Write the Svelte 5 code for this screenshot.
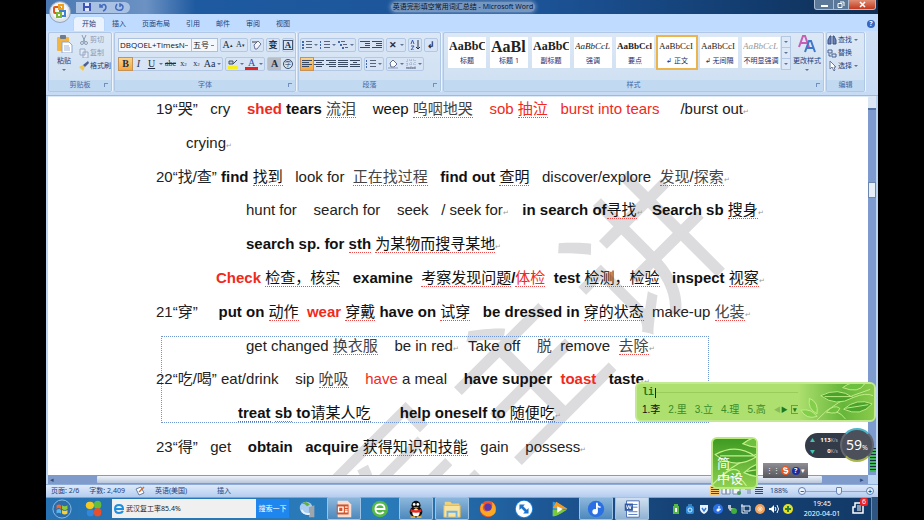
<script>
  const tabs = ['开始', '插入', '页面布局', '引用', '邮件', '审阅', '视图'];

  const styleCards = [
    { look: 'head', sample: 'AaBbC', name: '标题' },
    { look: 'head big', sample: 'AaBl', name: '标题 1' },
    { look: 'head', sample: 'AaBbC', name: '副标题' },
    { look: 'italic', sample: 'AaBbCcL', name: '强调' },
    { look: 'bold', sample: 'AaBbCcl', name: '要点' },
    { look: '', sample: 'AaBbCcI', name: '↲ 正文', on: true },
    { look: '', sample: 'AaBbCcI', name: '↲ 无间隔' },
    { look: 'italic pale', sample: 'AaBbCcL', name: '不明显强调' }
  ];

  // A number is a run of spaces, a string is plain text, a pair is [class, text].
  const end = ['mark', '↵'];
  const lines = [
    { indent: 0, runs: ['19“哭”', 3, 'cry', 4, ['b red', 'shed'], 1, ['b', 'tears'], 1, ['c u', '流泪'], 4, ['k', 'weep'], 1, ['c u', '呜咽地哭'], 4, ['red', 'sob'], 1, ['red u', '抽泣'], 3, ['red', 'burst into tears'], 5, '/burst out', end] },
    { indent: 30, runs: ['crying', end] },
    { indent: 0, runs: ['20“找/查”', 1, ['b', 'find'], 1, ['k u', '找到'], 3, 'look for', 2, ['c u', '正在找过程'], 3, ['b', 'find out'], 1, ['k u', '查明'], 3, 'discover/explore', 2, ['c u', '发现'], '/', ['c u', '探索'], end] },
    { indent: 90, runs: ['hunt for', 4, 'search for', 4, 'seek', 3, '/ seek for', end, 3, ['b', 'in search of'], ['k u', '寻找'], end, 2, ['b', 'Search sb'], 1, ['k u', '搜身'], end] },
    { indent: 90, runs: [['b', 'search sp. for '], ['b u', 'sth'], 1, ['k u', '为某物而搜寻某地'], end] },
    { indent: 60, runs: [['b red', 'Check'], 1, ['k u', '检查，核实'], 3, ['b', 'examine'], 2, ['k u', '考察发现问题'], ['b', '/'], ['red u', '体检'], 2, ['b', 'test'], 1, ['k u', '检测，检验'], 3, ['b', 'inspect'], 1, ['k u', '视察'], end] },
    { indent: 0, runs: ['21“穿”', 5, ['b', 'put on'], 1, ['k u', '动作'], 2, ['b red', 'wear'], 1, ['k u', '穿戴'], 1, ['b', 'have on'], 1, ['k u', '试穿'], 3, ['b', 'be dressed in'], 1, ['k u', '穿的状态'], 2, 'make-up', 1, ['c u', '化装'], end] },
    { indent: 90, runs: ['get changed', 1, ['c u', '换衣服'], 4, 'be in red', end, 2, 'Take off', 4, ['c', '脱'], 2, 'remove', 2, ['c u', '去除'], end] },
    { indent: 0, runs: ['22“吃/喝”', 1, 'eat/drink', 4, 'sip', 1, ['c u', '吮吸'], 4, ['red', 'have'], 1, 'a meal', 4, ['b', 'have supper'], 2, ['b red', 'toast'], 3, ['b', 'taste'], end] },
    { indent: 82, runs: [['b ug', 'treat'], 1, ['b u', 'sb'], ['b', ' to'], ['k u', '请某人吃'], 7, ['b', 'help oneself to'], 1, ['k u', '随便吃'], end] },
    { indent: 0, runs: ['23“得”', 3, 'get', 4, ['b', 'obtain'], 3, ['b', 'acquire'], 1, ['k u', '获得知识和技能'], 3, 'gain', 4, 'possess', end] }
  ];

  const candidates = ['李', '里', '立', '理', '高'];

  let zoom = $state(56);
  let search = $state('武汉复工率85.4%');
  let typed = $state('li');
</script>

{#snippet arrow()}<i class="arrow"></i>{/snippet}

{#snippet bars(widths, x)}
  <svg class="ic" viewBox="0 0 10 10">
    {#each widths as w, i}
      <rect x={x === 'r' ? 10 - w : x === 'c' ? (10 - w) / 2 : 0} y={1 + i * 2} width={w} height="1" fill="#3b4a63" />
    {/each}
  </svg>
{/snippet}

{#snippet listIcon(kind)}
  <svg class="ic" viewBox="0 0 10 10">
    {#each [1, 4, 7] as y, i}
      <rect x={kind === 2 ? i * 2 : 0} {y} width={kind === 1 ? 1 : 2} height="2" fill="#3f68ad" />
      <rect x={kind === 2 ? i * 2 + 3 : 4} {y} width={kind === 2 ? 4 : 6} height="1" fill="#58657c" />
    {/each}
  </svg>
{/snippet}

{#snippet leaves()}
  <g fill="#4aa32a" stroke="#c4f08c" stroke-width="1">
    <path d="M20 40Q38 18 76 6" fill="none" />
    <path d="M24 13Q42 3 58 15Q40 26 24 13Z" />
    <path d="M47 4Q58-5 70 0Q64 11 47 4Z" fill="#6cc03e" />
    <path d="M48 28Q62 15 78 22Q66 37 48 28Z" />
    <path d="M12 16Q22 20 20 33Q10 28 12 16Z" fill="#83cf4b" />
    <path d="M3 29Q14 27 20 36Q9 40 3 29Z" fill="#83cf4b" />
    <path d="M58 15Q72 9 79 13M28 14L56 14M50 27L74 23M30 32Q42 27 50 39" fill="none" />
    <path d="M30 31Q38 22 44 27Q42 35 30 31Z" fill="#6cc03e" />
  </g>
{/snippet}

<main>
  <header class="title">
    <div class="quick">
      <button aria-label="保存"><svg class="ic" viewBox="0 0 10 10"><path d="M1 1h8v8H1z" fill="#3e54b8" /><path d="M3 1h4v3H3zM3 6h4v3H3z" fill="#dfe8fa" /></svg></button>
      <button aria-label="撤消"><svg class="ic" viewBox="0 0 10 10"><path d="M2 2v3h3M2 5q5-5 6 0q0 3-3 4" fill="none" stroke="#4169bd" stroke-width="1.5" /></svg></button>
      <button aria-label="重复"><svg class="ic" viewBox="0 0 10 10"><path d="M3 2q-3 5 1 6q5 1 5-3q0-2-3-3v3" fill="none" stroke="#4169bd" stroke-width="1.5" /></svg></button>
    </div>
    <h1>英语完形填空常用词汇总结 - Microsoft Word</h1>
    <div class="winbtns">
      <button aria-label="最小化"><svg viewBox="0 0 18 9"><path d="M6 5h7v2H6z" fill="#fff" /></svg></button>
      <button aria-label="还原"><svg viewBox="0 0 14 9"><path d="M6 2h4v4M4 3.500h4v4H4z" fill="none" stroke="#fff" /></svg></button>
      <button class="close" aria-label="关闭"><svg viewBox="0 0 26 9"><path d="M11 2l5 5M16 2l-5 5" stroke="#fff" stroke-width="1.600" /></svg></button>
    </div>
  </header>
  <button class="orb" aria-label="Office 按钮">
    <svg viewBox="0 0 22 22">
      <circle cx="11" cy="11" r="10.500" fill="#dfe3ea" stroke="#8ea2bd" />
      <circle cx="11" cy="10" r="8" fill="#f6f7fa" />
      <g fill="none" stroke-width="2"><rect x="5" y="6" width="6" height="6" rx="1" stroke="#e0561c" /><rect x="10" y="4" width="4" height="4" stroke="#f0a11c" /><rect x="12" y="10" width="4" height="5" stroke="#3f83d0" /><rect x="8" y="12" width="4" height="4" stroke="#7db634" /></g>
    </svg>
  </button>

  <nav class="tabs">
    {#each tabs as t, i}<button class:active={i === 0}>{t}</button>{/each}
    <button class="help" aria-label="帮助">?</button>
  </nav>

  <section class="ribbon">
    <div class="group clip">
      <div class="body">
        <button class="tall">
          <svg width="18" height="18" viewBox="0 0 18 18"><rect x="2" y="2" width="12" height="14" rx="1" fill="#f0b545" /><rect x="5" y="0" width="6" height="4" rx="1" fill="#6f7a8c" /><path d="M7 7h7l3 3v8H7z" fill="#fff" stroke="#8ea7cf" /><path d="M9 11h5M9 13h6M9 15h6" stroke="#9db3d8" /></svg>
          <span>粘贴</span>{@render arrow()}
        </button>
        <div class="stack">
          <button class="dim"><svg class="ic" viewBox="0 0 10 10"><path d="M3 0l3 7M7 0L4 7" stroke="#8d9bb0" /><circle cx="3" cy="8" r="1.500" fill="none" stroke="#8d9bb0" /><circle cx="7" cy="8" r="1.500" fill="none" stroke="#8d9bb0" /></svg>剪切</button>
          <button class="dim"><svg class="ic" viewBox="0 0 10 10"><path d="M1 1h5v6H1zM4 4h5v6H4z" fill="#e3ebf6" stroke="#98a9c4" /></svg>复制</button>
          <button><svg class="ic" viewBox="0 0 10 10"><path d="M0 6l4-2 2 2-2 4z" fill="#f1c84c" /><path d="M4 4l5-4 1 2-4 4z" fill="#4c5f92" /></svg>格式刷</button>
        </div>
      </div>
      <footer>剪贴板<i class="launch"></i></footer>
    </div>

    <div class="group font">
      <div class="body rows">
        <div class="row">
          <select class="face" aria-label="字体"><option>DBQOEL+TimesNe</option></select>
          <select class="size" aria-label="字号"><option>五号</option></select>
          <div class="set serif"><button>A<sup>▴</sup></button><button class="sm">A<sup>▾</sup></button></div>
          <div class="set"><button aria-label="清除格式"><svg class="ic" viewBox="0 0 10 10"><path d="M2 5l4-4 3 3-4 5H3z" fill="#f4f4fa" stroke="#65749a" /><path d="M0 2h5" stroke="#444" /></svg></button></div>
          <div class="set"><button class="wen">变</button></div>
          <div class="set"><button class="boxed">A</button></div>
        </div>
        <div class="row">
          <div class="set serif"><button class="on"><b>B</b></button><button><em>I</em></button><button><u>U</u></button>{@render arrow()}<button class="sm"><s>abc</s></button><button class="sm">x<sub>2</sub></button><button class="sm">x<sup>2</sup></button><button>Aa</button>{@render arrow()}</div>
          <div class="set serif"><button class="hl" aria-label="突出显示"><svg class="ic" viewBox="0 0 10 10"><path d="M1 2h4v3H1zM5 5l4-4" stroke="#444f63" fill="#b8c5d6" /><path d="M0 7h10v3H0z" fill="#f7ef1d" /></svg></button>{@render arrow()}<button class="fc">A</button>{@render arrow()}</div>
          <div class="set serif"><button class="shade">A</button><button class="ring">字</button></div>
        </div>
      </div>
      <footer>字体<i class="launch"></i></footer>
    </div>

    <div class="group para">
      <div class="body rows">
        <div class="row">
          <div class="set">{#each [0, 1, 2] as k}<button aria-label="列表">{@render listIcon(k)}</button>{@render arrow()}{/each}</div>
          <div class="set"><button aria-label="减少缩进">{@render bars([10, 5, 5, 10], 'r')}</button><button aria-label="增加缩进">{@render bars([10, 6, 6, 10], 'r')}</button></div>
          <div class="set"><button class="glyph">✕</button>{@render arrow()}</div>
          <div class="set"><button aria-label="排序"><svg class="ic" viewBox="0 0 10 10"><path d="M1 4l1.500-4 1.500 4M1 6h3l-3 4h3" fill="none" stroke="#3c55b0" /><path d="M8 0v9M6 7l2 2 2-2" fill="none" stroke="#26324a" /></svg></button></div>
          <div class="set"><button class="glyph">↲</button></div>
        </div>
        <div class="row">
          <div class="set"><button class="on" aria-label="左对齐">{@render bars([10, 7, 10, 7], 'l')}</button><button aria-label="居中">{@render bars([10, 6, 10, 6], 'c')}</button><button aria-label="右对齐">{@render bars([10, 7, 10, 7], 'r')}</button><button aria-label="两端对齐">{@render bars([10, 10, 10, 10], 'l')}</button><button aria-label="分散对齐">{@render bars([10, 4, 10, 10], 'c')}</button></div>
          <div class="set"><button aria-label="行距">{@render listIcon(1)}</button>{@render arrow()}</div>
          <div class="set"><button aria-label="底纹"><svg class="ic" viewBox="0 0 10 10"><path d="M2 4l3-3 4 4-3 3H3z" fill="#fff" stroke="#5a6c8f" /><path d="M0 9h10" stroke="#8c9bb4" /></svg></button>{@render arrow()}<button aria-label="边框"><svg class="ic" viewBox="0 0 10 10"><path d="M1 1h8v8H1zM5 1v8M1 5h8" fill="none" stroke="#97a6bf" stroke-dasharray="1 1" /><path d="M0 9h10" stroke="#55637c" /></svg></button>{@render arrow()}</div>
        </div>
      </div>
      <footer>段落<i class="launch"></i></footer>
    </div>

    <div class="group styles">
      <div class="body">
        <div class="cards">
          {#each styleCards as s}
            <button class="card" class:chosen={s.on}><span class="sample {s.look}">{s.sample}</span><span>{s.name}</span></button>
          {/each}
        </div>
        <div class="more"><button aria-label="上">{@render arrow()}</button><button aria-label="下">{@render arrow()}</button><button aria-label="更多">{@render arrow()}</button></div>
        <button class="tall">
          <svg width="18" height="18" viewBox="0 0 18 18"><path d="M1 12L5 1h2l4 11M3 8h6" fill="none" stroke="#c45fb4" stroke-width="2" /><path d="M7 17l4-11h2l4 11M9 13h6" fill="none" stroke="#3f78c8" stroke-width="2" /></svg>
          <span>更改样式</span>{@render arrow()}
        </button>
      </div>
      <footer>样式<i class="launch"></i></footer>
    </div>

    <div class="group edit">
      <div class="body">
        <div class="stack">
          <button><svg class="ic" viewBox="0 0 10 10"><path d="M1 9V5l2-4h1v8zM6 9V1h1l2 4v4z" fill="#6b83b5" stroke="#3b5080" /></svg>查找{@render arrow()}</button>
          <button><svg class="ic" viewBox="0 0 10 10"><path d="M1 2h4v3H1zM5 6h4v3H5zM2 6v2h2" fill="none" stroke="#49618f" /></svg>替换</button>
          <button><svg class="ic" viewBox="0 0 10 10"><path d="M3 0v8l2-2 2 4 1-1-1-3h2z" fill="#fff" stroke="#68799c" /></svg>选择{@render arrow()}</button>
        </div>
      </div>
      <footer>编辑</footer>
    </div>
  </section>

  <section class="doc">
    <div class="paper">
      <div class="watermark" aria-hidden="true"><span>军</span><span>主</span><span>讲</span></div>
      <div class="frame"></div>
      {#each lines as l}
        <p style:padding-left="{l.indent}px">{#each l.runs as r}{#if typeof r === 'number'}{' '.repeat(r)}{:else if typeof r === 'string'}{r}{:else}<span class={r[0]}>{r[1]}</span>{/if}{/each}</p>
      {/each}
    </div>
    <div class="vscroll"><span class="ruler"></span><span class="thumb"></span></div>
  </section>

  <div class="hscroll"><i>◂</i><span></span><i class="right">▸</i></div>

  <div class="status">
    <span>页面: 2/6</span><span>字数: 2,409</span>
    <svg class="ic" viewBox="0 0 10 10"><path d="M1 3l5-2 3 6-5 2z" fill="#fff" stroke="#6a7da2" /><path d="M4 6l5-5" stroke="#d0702c" stroke-width="1.500" /></svg>
    <span>英语(美国)</span><span class="ins">插入</span>
    <div class="views">
      <button class="on" aria-label="页面视图">{@render bars([8, 8, 8, 8], 'c')}</button>
      <button aria-label="阅读版式"><svg class="ic" viewBox="0 0 10 10"><path d="M1 2h4v6H1zM5 2h4v6H5z" fill="#f0f4fa" stroke="#7b8ba6" /></svg></button>
      <button aria-label="Web 版式"><svg class="ic" viewBox="0 0 10 10"><path d="M1 2h7v6H1z" fill="#f0f4fa" stroke="#7b8ba6" /><circle cx="7" cy="7" r="2" fill="#4d9a5a" /></svg></button>
      <button aria-label="大纲"><svg class="ic" viewBox="0 0 10 10"><path d="M2 3h6M4 5h4M4 7h4" stroke="#7b8ba6" /></svg></button>
      <button aria-label="普通">{@render bars([8, 8, 8, 8], 'c')}</button>
    </div>
    <span class="pct">188%</span>
    <button class="round" aria-label="缩小">−</button>
    <input type="range" aria-label="缩放" min="0" max="100" bind:value={zoom} />
    <button class="round" aria-label="放大">+</button>
  </div>

  <footer class="taskbar">
    <button class="app" aria-label="开始菜单"><svg viewBox="0 0 22 22"><circle cx="11" cy="11" r="10" fill="#2c6aa8" stroke="#8ec3ea" /><path d="M5 7q3-2 5 0v4q-3-2-5 0z" fill="#f0662c" /><path d="M11 7q3 2 6 0v4q-3 2-6 0z" fill="#8ccb3a" /><path d="M5 12q3-2 5 0v4q-3-2-5 0z" fill="#55b7f0" /><path d="M11 12q3 2 6 0v4q-3 2-6 0z" fill="#fbd034" /></svg></button>
    <button class="app second" aria-label="工具"><svg viewBox="0 0 22 22"><rect x="2" y="3" width="9" height="8" rx="4" fill="#f4c921" /><rect x="11" y="2" width="8" height="9" rx="4" fill="#62bd3c" /><rect x="3" y="11" width="8" height="8" rx="4" fill="#3287dd" /><rect x="11" y="10" width="8" height="9" rx="4" fill="#ea4f2c" /></svg></button>
    <form class="search" onsubmit={(e) => e.preventDefault()}>
      <svg viewBox="0 0 12 12"><path d="M2 6h8q0-4-4-4T2 6q0 4 4 4 3 0 4-2" fill="none" stroke="#1e8fe0" stroke-width="2" /></svg>
      <input aria-label="搜索" bind:value={search} /><button>搜索一下</button>
    </form>
    <div class="apps">
      <button class="app" aria-label="同步"><svg viewBox="0 0 22 22"><circle cx="9" cy="10" r="7" fill="#a9cdf2" /><path d="M4 5q5-4 9 1l-3 2q-2-3-6-3z" fill="#62b13b" /><path d="M12 9l6-2v13h-6z" fill="#9da5ad" /><path d="M4 12q3 6 9 4" stroke="#e8f1fa" stroke-width="2" fill="none" /></svg></button>
      <button class="app open" aria-label="PowerPoint"><svg viewBox="0 0 22 22"><path d="M4 2h11l4 4v14H4z" fill="#f7ded3" /><path d="M3 6h13v11H3z" fill="#d3532b" /><path d="M5 9h5v5H5zM12 9h3M12 12h3M12 14h3" stroke="#fff" stroke-width="1.500" fill="none" /></svg></button>
      <button class="app" aria-label="浏览器"><svg viewBox="0 0 22 22"><circle cx="11" cy="11" r="9" fill="#55b847" /><path d="M6 11h10q0-5-5-5t-5 5q0 5 5 5 3 0 4-2" fill="none" stroke="#fff" stroke-width="2" /></svg></button>
      <button class="app open" aria-label="QQ"><svg viewBox="0 0 22 22"><ellipse cx="11" cy="14" rx="7" ry="6" fill="#111" /><circle cx="11" cy="7" r="5" fill="#111" /><ellipse cx="11" cy="15" rx="4" ry="4" fill="#fff" /><path d="M5 11q6 3 12 0v3q-6 2-12 0z" fill="#e32a20" /><circle cx="9" cy="6" r="1.500" fill="#fff" /><circle cx="13" cy="6" r="1.500" fill="#fff" /><path d="M8 9h6l-3 2z" fill="#f5a91c" /><path d="M5 19h5v2H5zM12 19h5v2h-5z" fill="#f5a91c" /></svg></button>
      <button class="app open" aria-label="文件夹"><svg viewBox="0 0 22 22"><path d="M3 3h6l2 2h8v5H3z" fill="#f0d27a" /><path d="M2 7h18v13H2z" fill="#f8e3a0" stroke="#d9b455" /><path d="M6 20v-6h10v6" fill="none" stroke="#6cb3e2" stroke-width="2" /></svg></button>
      <button class="app" aria-label="Firefox"><svg viewBox="0 0 22 22"><circle cx="11" cy="11" r="9" fill="#f0532d" /><path d="M4 5q-4 8 2 12 7 5 13-2 2-8-4-12 2 5-1 8-4 5-8 1-2-4 1-6-2 0-3-1z" fill="#fba922" /><circle cx="11" cy="9" r="4" fill="#573ab0" /></svg></button>
      <button class="app" aria-label="TeamViewer"><svg viewBox="0 0 22 22"><circle cx="11" cy="11" r="10" fill="#1d86e0" /><circle cx="11" cy="11" r="9" fill="#fff" /><path d="M8 8l6 6" stroke="#1d74cc" stroke-width="3" /><path d="M6 6h6l-6 6zM16 16h-6l6-6z" fill="#1d74cc" /></svg></button>
      <button class="app" aria-label="播放器"><svg viewBox="0 0 22 22"><path d="M3 3q2-1 15 7 2 1 0 2Q5 20 3 19z" fill="#2d9be6" /><path d="M3 10l4-7q11 7 12 8z" fill="#f79a20" /><path d="M3 12l15 0Q6 20 3 19z" fill="#7bc83a" /><path d="M8 8l6 3-6 4z" fill="#fff" /></svg></button>
      <button class="app open" aria-label="音乐"><svg viewBox="0 0 22 22"><circle cx="11" cy="11" r="9" fill="#2a70e4" /><path d="M12 4v10" stroke="#fff" stroke-width="2" /><path d="M12 4q1 4 4 4v2q-3 0-4-2z" fill="#fff" /><circle cx="10" cy="14" r="3" fill="#fff" /></svg></button>
      <button class="app open lit" aria-label="Word"><svg viewBox="0 0 22 22"><path d="M5 2h14v18H5z" fill="#fff" stroke="#4368ad" /><path d="M11 6h6M11 9h6M7 14h10M7 17h10" stroke="#4a73bb" /><path d="M3 5h9v8H3z" fill="#3159a5" /><path d="M5 7l1 4 1.500-4L9 11l1-4" stroke="#fff" fill="none" /></svg></button>
    </div>
    <div class="tray">
      <svg viewBox="0 0 10 10"><path d="M3 0h4v2h1v8H2V2h1z" fill="#58b749" /><path d="M4 4h2v4H4z" fill="#fff" /></svg>
      <svg viewBox="0 0 10 10"><rect x="1" y="2" width="8" height="8" rx="2" fill="#2f8edb" /><circle cx="5" cy="6" r="2" fill="none" stroke="#cfe6fb" /><path d="M3 1h4" stroke="#69b8f5" /></svg>
      <svg viewBox="0 0 10 10"><path d="M1 1h8v4q0 3-4 5-4-2-4-5z" fill="#e9f3ff" /><path d="M3 4l2 3 2-3" stroke="#2d7bdb" fill="none" stroke-width="1.500" /></svg>
      <svg viewBox="0 0 10 10"><circle cx="5" cy="5" r="5" fill="#2a70e4" /><path d="M6 2v4l2-1" stroke="#fff" fill="none" /><circle cx="5" cy="6" r="1.500" fill="#fff" /></svg>
      <svg viewBox="0 0 10 10"><path d="M1 1h3v3h3v3H3L1 4z" fill="#b9c3cd" /><circle cx="7" cy="7" r="3" fill="#42ae3e" /></svg>
      <svg viewBox="0 0 10 10"><path d="M3 2h6v5H3zM0 2h3M1 0v9h6" fill="none" stroke="#f1f6fb" /></svg>
      <svg viewBox="0 0 10 10"><circle cx="5" cy="5" r="5" fill="#f3a25b" /><path d="M2 5h6M5 2v6M3 3l4 4M7 3L3 7" stroke="#fbe3c8" /></svg>
      <svg viewBox="0 0 10 10"><path d="M0 4h2l3-3v8L2 6H0z" fill="#fff" /><path d="M6 3q2 2 0 4M8 1q3 4 0 8" stroke="#fff" fill="none" /></svg>
      <svg viewBox="0 0 10 10"><circle cx="5" cy="5" r="5" fill="#e4df2b" /><path d="M5 2v6M2 5h6" stroke="#2b7f32" stroke-width="2" /></svg>
    </div>
    <time>19:45<br />2020-04-01</time>
    <button class="note" aria-label="通知"><svg viewBox="0 0 12 12"><path d="M3 1h8v10H1V5h2z" fill="none" stroke="#fff" stroke-width="1.500" /><path d="M5 4h4M5 6h4M5 8h4" stroke="#fff" /></svg><span>6</span></button>
    <div class="peek"></div>
  </footer>

  <aside class="ime">
    <svg class="art" viewBox="0 0 80 40" preserveAspectRatio="none"><rect width="80" height="40" fill="url(#fade)" /><defs><linearGradient id="fade"><stop offset="0" stop-color="#aee06f" /><stop offset="0.600" stop-color="#66b63a" /><stop offset="1" stop-color="#8acb4c" /></linearGradient></defs>{@render leaves()}</svg>
    <input aria-label="拼音" bind:value={typed} />
    <i class="caret"></i>
    <hr />
    <ol>
      {#each candidates as c, i}<li class:first={i === 0}>{i + 1}.{c}</li>{/each}
      <li class="nav"><i>◀</i>▶<b>▾</b></li>
    </ol>
  </aside>

  <aside class="badge">
    <svg viewBox="0 0 80 40" preserveAspectRatio="xMidYMid slice">{@render leaves()}</svg>
    <span>简<br />中设</span>
  </aside>

  <aside class="sogou">
    <i>⋮⋮</i><svg viewBox="0 0 10 10"><circle cx="5" cy="5" r="5" fill="#f2571d" /><path d="M7 3q-4-2-4 0t3 2 0 3q-2 0-3-1" stroke="#fff" fill="none" stroke-width="1.500" /></svg><b>?</b><i>▾</i>
  </aside>

  <div class="level"></div>
  <aside class="speed">
    <div class="rates"><span><i>▲</i>113<small>K/s</small></span><span><i>▼</i>0<small>K/s</small></span></div>
    <div class="dial">59<small>%</small></div>
  </aside>
</main>

<style>
  :global(body) { margin: 0; background: #000; }
  main { position: relative; margin: 0 46px; height: 100vh; display: flex; flex-direction: column; overflow: hidden; font: 7px/10px "Noto Sans", "Noto Sans CJK SC", sans-serif; color: #1f3d78; background: #bcd5f3; }
  button { font: inherit; color: inherit; background: none; border: 0; padding: 0; margin: 0; white-space: nowrap; }
  i { font-style: normal; }
  .ic { width: 10px; height: 10px; flex: none; display: block; }
  .arrow { width: 0; height: 0; border: 2px solid transparent; border-top-color: #5f7596; border-bottom: 0; flex: none; margin: 0 1px; }

  .title { height: 14px; flex: none; display: flex; align-items: center; justify-content: space-between; background: linear-gradient(90deg, #4978b2 0, #6c92c3 12%, #1e5aa0 18%, #1c5396 60%, #123c6e 85%, #0f2d52 100%); }
  .quick { display: flex; gap: 6px; height: 11px; align-items: center; margin-left: 30px; padding: 0 6px; border-radius: 0 6px 6px 0; background: #a9c2e4; }
  h1 { margin: 0 18px 0 0; padding: 0 2px; font: 7px/10px "Open Sans", "Noto Sans CJK SC", sans-serif; color: #06101f; background: #7496c1; box-shadow: 0 0 4px 1px #7496c1; border-radius: 5px; }
  .winbtns { display: flex; align-self: flex-start; margin-right: 2px; border: 1px solid #a9bdd6; border-top: 0; border-radius: 0 0 3px 3px; overflow: hidden; background: #5c7898; }
  .winbtns button { height: 9px; border-right: 1px solid #a9bdd6; }
  .winbtns svg { height: 9px; display: block; }
  .winbtns .close { background: linear-gradient(#e08d74, #c23a1e); border: 0; }
  .orb { position: absolute; left: 3px; top: 1px; width: 22px; height: 22px; z-index: 2; }
  .orb svg { display: block; }

  .tabs { height: 17px; flex: none; display: flex; align-items: flex-end; padding: 0 3px 0 28px; background: #bfdbff; }
  .tabs button { height: 14px; padding: 0 8px; line-height: 12px; }
  .tabs .active { background: #e9f2fd; border-radius: 3px 3px 0 0; box-shadow: 0 0 1px #7f9fcb; }
  .tabs .help { margin: 0 0 3px auto; padding: 0; width: 8px; height: 8px; line-height: 8px; border-radius: 4px; background: #3767c0; color: #fff; font-weight: bold; }

  .ribbon { flex: none; height: 60px; display: flex; gap: 2px; padding: 1px 13px 3px 2px; background: linear-gradient(#cfe0f4, #c7dbf4); border-bottom: 1px solid #9db9dd; box-sizing: content-box; }
  .group { display: flex; flex-direction: column; border: 1px solid #b0c8e6; border-radius: 2px; background: linear-gradient(#dce8f6, #cddff2); box-sizing: border-box; box-shadow: 1px 0 #eef5fd; }
  .group .body { flex: 1; display: flex; }
  .group footer { position: relative; height: 11px; line-height: 10px; text-align: center; background: #c1d9f1; color: #4468a3; }
  .launch { position: absolute; right: 3px; top: 3px; width: 4px; height: 4px; box-sizing: border-box; border: 1px solid #6f8fbd; border-right: 0; border-bottom: 0; }
  .clip { width: 64px; }
  .font { width: 182px; }
  .para { width: 143px; }
  .styles { flex: 1; min-width: 0; }
  .edit { width: 39px; }
  .tall { width: 30px; display: flex; flex-direction: column; align-items: center; gap: 3px; padding-top: 2px; }
  .stack { display: flex; flex-direction: column; gap: 3px; padding-top: 2px; }
  .stack button { display: flex; align-items: center; gap: 1px; height: 10px; }
  .dim { color: #8c9bb3; }
  .rows { flex-direction: column; gap: 5px; padding: 5px 1px 0; }
  .row { display: flex; gap: 2px; height: 14px; }
  .set { display: flex; align-items: center; border: 1px solid #b3c8e4; border-radius: 2px; box-sizing: border-box; background: #d6e4f5; }
  .set button { min-width: 12px; height: 12px; display: flex; align-items: center; justify-content: center; line-height: 12px; color: #232f45; }
  .serif button { font: 10px/12px "Liberation Serif", serif; }
  .serif .sm { font-size: 8px; }
  .font .serif button { min-width: 13px; }
  .set sup, .set sub { font-size: 5px; line-height: 5px; }
  .set .on { background: linear-gradient(#fbd48c, #f7a73c); box-shadow: 0 0 0 1px #c4935a; }
  .set .fc { border-bottom: 3px solid #e32222; box-sizing: border-box; line-height: 9px; color: #2f4fa5; }
  .set .shade { background: #b9bec6; font-weight: bold; }
  .font .set .ring { width: 10px; min-width: 10px; height: 10px; margin: 0 2px; border: 1px solid #3c4960; border-radius: 5px; box-sizing: border-box; font-size: 6px; }
  .set .wen, .set .glyph { font-size: 9px; font-weight: bold; }
  .set .boxed { font: 9px/9px "Liberation Serif", serif; font-weight: bold; height: 10px; min-width: 10px; border: 1px solid #48566e; box-sizing: border-box; }
  select { height: 14px; box-sizing: border-box; border: 1px solid #abc1de; border-radius: 0; padding: 0 6px 0 1px; margin: 0; color: #111; font: 8px/12px "Open Sans", "Noto Sans CJK SC", sans-serif; appearance: none; background: #f4f8fd linear-gradient(#6f84a6, #6f84a6) no-repeat right 3px center / 3px 1px; }
  .font .row { padding-left: 2px; }
  .face { width: 74px; margin-right: -3px; }
  .size { width: 32px; }
  .cards { display: flex; gap: 4px; padding: 4px 0 0 4px; align-items: flex-start; }
  .card { width: 38px; height: 31px; background: #fff; display: flex; flex-direction: column; align-items: center; overflow: hidden; color: #1c2a6b; }
  .chosen { outline: 2px solid #eab54e; outline-offset: 0; }
  .sample { width: 36px; height: 19px; overflow: hidden; text-align: left; font: 9px/19px "Liberation Serif", serif; color: #222; }
  .sample.head { font-size: 12px; font-weight: bold; }
  .sample.big { font-size: 16px; }
  .sample.bold { font-weight: bold; }
  .sample.italic { font-style: italic; }
  .sample.pale { color: #999; }
  .more { display: flex; flex-direction: column; gap: 1px; margin: 4px 2px 0; }
  .more button { width: 8px; height: 10px; display: flex; align-items: center; justify-content: center; background: #dce8f7; box-shadow: 0 0 0 1px #b4c8e3; }

  .doc { flex: 1; min-height: 0; display: flex; background: #fff; margin: 0 2px; }
  .paper { position: relative; flex: 1; min-width: 0; overflow: hidden; display: flex; flex-direction: column; justify-content: space-between; padding: 2px 0 18px 108px; border-top: 1px solid #dceaf8; }
  p { position: relative; margin: 0; font: 15px/20px "Liberation Sans", "Noto Sans CJK SC", sans-serif; height: 20px; color: #222; white-space: pre; }
  .b { font-weight: bold; color: #111; }
  .k { color: #111; }
  .c { color: #444; }
  .red { color: #f02a1c; }
  .u, .ug { border-bottom: 1px dotted #f04a4a; }
  .ug { border-color: #3c9a3c; }
  .mark { display: inline-block; width: 7px; font-size: 7px; color: #999; }
  .watermark { position: absolute; left: 227px; top: 195px; display: flex; gap: 18px; font: 150px/150px "Noto Sans CJK SC", sans-serif; color: #dcdcde; white-space: nowrap; transform: rotate(-45deg); }
  .frame { position: absolute; left: 113px; top: 239px; width: 548px; height: 87px; border: 1px dotted #6f95d6; box-sizing: border-box; }
  .vscroll { width: 8px; background: #7d9bce; display: flex; flex-direction: column; align-items: center; }
  .ruler { width: 8px; height: 14px; background: #dbe6f5; border-bottom: 2px solid #54719f; box-sizing: border-box; }
  .thumb { margin-top: 72px; width: 6px; height: 14px; border: 1px solid #6d86b0; background: #e6eefa; }

  .hscroll { height: 9px; flex: none; display: flex; align-items: center; background: #7e9bcc; color: #304d80; margin: 0 10px 0 2px; }
  .hscroll i { width: 49px; line-height: 9px; padding-left: 2px; box-sizing: border-box; }
  .hscroll span { flex: 1; height: 7px; background: linear-gradient(#eef3fb, #b9c6da); border-radius: 1px; }
  .hscroll .right { width: 46px; text-align: right; padding-right: 4px; }

  .status { height: 13px; flex: none; display: flex; align-items: center; gap: 10px; padding: 0 4px 0 5px; background: linear-gradient(#dfeafa, #b4cdef); border-top: 1px solid #8fadd8; box-sizing: border-box; }
  .ins { margin-left: 20px; }
  .views { display: flex; gap: 1px; margin-left: auto; }
  .views button { width: 10px; height: 10px; }
  .views .on { background: #f6c670; }
  .pct { width: 20px; margin: 0 -4px; }
  .round { width: 8px; height: 8px; line-height: 7px; border: 1px solid #5d7db0; border-radius: 5px; box-sizing: border-box; background: #edf4fd; font-weight: bold; flex: none; }
  .status input { width: 60px; margin: 0 -10px; height: 10px; appearance: none; background: linear-gradient(#8ba6cf, #8ba6cf) no-repeat center / 100% 1px; }
  .status input::-webkit-slider-thumb { appearance: none; width: 6px; height: 8px; background: #e8f0fb; border: 1px solid #6683b1; border-radius: 1px 1px 3px 3px; }
  .status .pct + .round { margin-left: 2px; }

  .taskbar { height: 23px; flex: none; display: flex; align-items: center; padding-left: 5px; color: #fff; background: linear-gradient(90deg, #2672b3 0, #2a7cbb 40%, #1d5795 60%, #164377 75%, #123a68 100%); box-shadow: inset 0 1px #78a6d3; }
  .app { width: 34px; height: 23px; display: flex; align-items: center; justify-content: center; flex: none; }
  .app svg { width: 20px; height: 20px; }
  .taskbar > .app { width: 22px; }
  .taskbar > .second { margin: 0 7px 0 10px; }
  .search { display: flex; align-items: center; width: 177px; height: 19px; background: #f0f0f0; flex: none; }
  .search svg { width: 12px; height: 12px; padding: 0 1px; flex: none; }
  .search input { flex: 1; min-width: 0; border: 0; padding: 0; background: none; font: inherit; color: #222; }
  .search button { width: 33px; height: 19px; background: #1e86ee; color: #fff; }
  .apps { display: flex; gap: 2px; margin-left: 2px; }
  .open { background: linear-gradient(#8fb9dc, #4a86bb); box-shadow: inset 0 0 0 1px #9dc4e4; border-radius: 2px; }
  .lit { background: linear-gradient(#d3e2f0, #8db0d2); }
  .tray { display: flex; gap: 4px; margin-left: auto; }
  .tray svg { width: 10px; height: 10px; }
  time { width: 58px; text-align: center; line-height: 10px; }
  .note { position: relative; width: 14px; height: 14px; margin-right: 6px; }
  .note svg { width: 12px; height: 12px; }
  .note span { position: absolute; right: -3px; top: -4px; width: 8px; height: 8px; line-height: 8px; background: #e22; border-radius: 2px; }
  .peek { width: 6px; height: 23px; background: #2d557f; border-left: 1px solid #6d8fb2; }

  .ime { position: absolute; right: 2px; bottom: 98px; width: 241px; height: 40px; box-sizing: border-box; border: 2px solid #c3ea92; border-radius: 6px; background: #aee06f; overflow: hidden; display: flex; flex-wrap: wrap; align-content: flex-start; align-items: center; padding-left: 5px; }
  .art { position: absolute; right: 0; top: 0; width: 76px; height: 36px; }
  .ime input { display: block; width: 13px; height: 17px; margin: 0; padding: 0; border: 0; background: none; font: bold 10px/17px "Liberation Mono", monospace; color: #17741c; outline: none; }
  .caret { width: 1px; height: 10px; background: #222; }
  .ime hr { flex: none; width: 150px; height: 1px; margin: 0 60px 0 0; border: 0; background: #98cd5b; }
  .ime ol { flex: none; display: flex; gap: 8px; margin: 0; padding: 2px 0; list-style: none; font: 10px/14px "Liberation Sans", "Noto Sans CJK SC", sans-serif; color: #3a8b28; }
  .ime .first { color: #111; }
  .ime .nav { font-size: 7px; color: #1c7a1c; }
  .nav i { color: #86bd5a; }
  .nav b { border: 1px solid #5fa63c; padding: 0 1px; margin-left: 3px; line-height: 7px; display: inline-block; }
  .badge { position: absolute; left: 665px; bottom: 31px; width: 47px; height: 52px; box-sizing: border-box; border: 2px solid #b8ea80; border-radius: 6px; background: linear-gradient(#3f9b22, #8ed04f); overflow: hidden; }
  .badge svg { width: 43px; height: 48px; display: block; }
  .badge span { position: absolute; left: 4px; bottom: 2px; font: 13px/15px "Noto Sans CJK SC", sans-serif; color: #fff; }
  .sogou { position: absolute; left: 717px; bottom: 42px; width: 45px; height: 15px; display: flex; align-items: center; justify-content: space-between; padding: 0 3px; box-sizing: border-box; background: linear-gradient(#8e8e94, #55555b); color: #fff; }
  .sogou svg { width: 9px; height: 9px; }
  .sogou b { width: 8px; height: 8px; line-height: 8px; border-radius: 4px; text-align: center; background: #1c2e9c; }
  .level { position: absolute; right: 2px; bottom: 48px; width: 6px; height: 24px; background: repeating-linear-gradient(#1c2c44 0 1px, #3dbb5c 1px 3px); }
  .speed { position: absolute; right: 4px; bottom: 58px; display: flex; align-items: center; color: #fff; }
  .rates { width: 52px; height: 25px; padding: 1px 19px 0 5px; box-sizing: border-box; margin-right: -17px; border-radius: 13px; background: #343b48; display: flex; flex-direction: column; justify-content: center; font-size: 6px; font-weight: bold; }
  .rates span { display: flex; justify-content: flex-end; line-height: 11px; }
  .rates i { font-size: 5px; color: #48c4b0; margin-right: auto; }
  .rates small { font-size: 5px; font-weight: normal; color: #aab2bf; }
  .dial { width: 34px; height: 34px; box-sizing: border-box; border-radius: 17px; border: 2px solid #62676f; border-top-color: #4ab6c8; border-bottom-color: #a9b64c; background: #4b505b; font: 14px/30px "Noto Sans", sans-serif; text-align: center; white-space: nowrap; }
  .dial small { font-size: 7px; }
</style>
